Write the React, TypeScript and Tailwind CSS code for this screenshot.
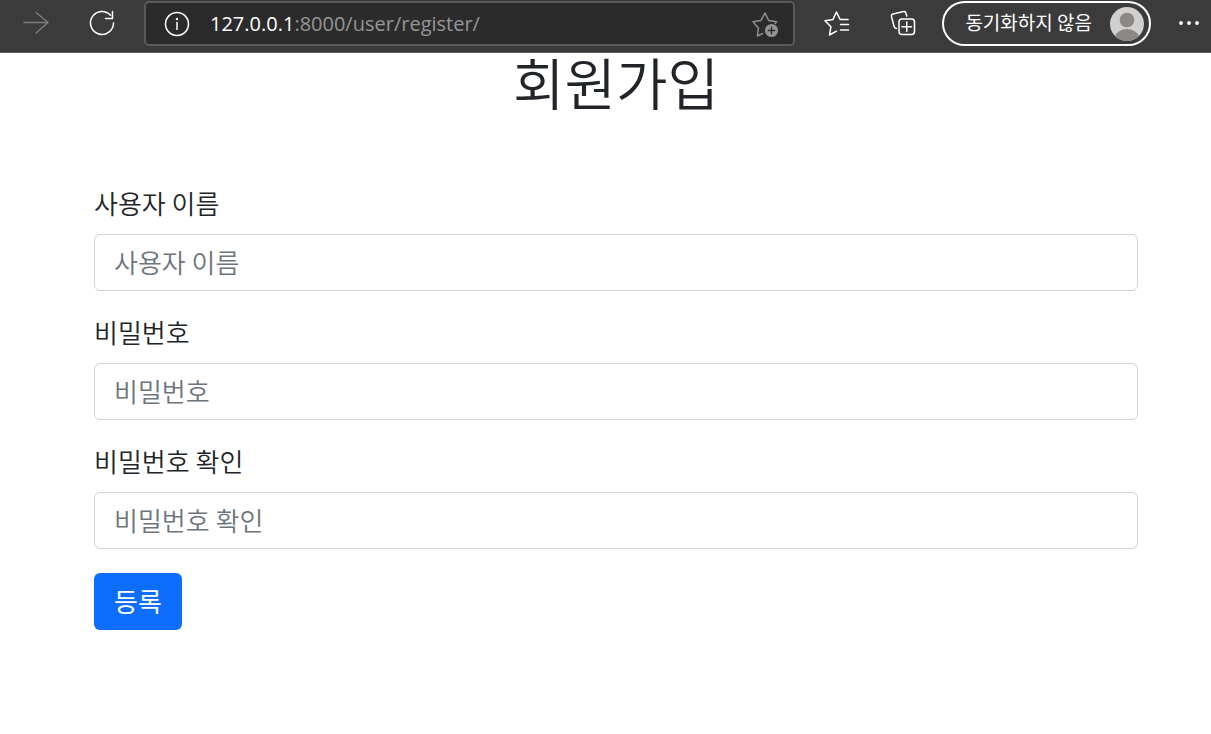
import type { ReactNode } from "react";

interface Field {
  id: string;
  label: string;
  type: "text" | "password";
}

const fields: Field[] = [
  { id: "username", label: "사용자 이름", type: "text" },
  { id: "password", label: "비밀번호", type: "password" },
  { id: "re-password", label: "비밀번호 확인", type: "password" },
];

export default function App() {
  return (
    <div className="min-h-screen bg-white font-['Noto_Sans_CJK_KR',sans-serif] text-[#212529]">
      <BrowserBar />
      <main className="pr-[73px] pl-[94px]">
        <h1 className="text-center text-[56px] leading-14 font-[350]">회원가입</h1>
        <RegisterForm />
      </main>
    </div>
  );
}

function RegisterForm() {
  return (
    <form className="mt-[77px] flex flex-col gap-6" onSubmit={(e) => e.preventDefault()}>
      {fields.map((f) => (
        <div key={f.id} className="flex flex-col gap-[14px]">
          <label htmlFor={f.id} className="text-[26px] leading-[34px] font-[350]">
            {f.label}
          </label>
          <input
            id={f.id}
            name={f.id}
            type={f.type}
            placeholder={f.label}
            className="h-[57px] w-full rounded-md border border-[#ced4da] px-[19px] pb-[2px] text-[26px] font-[350] outline-none placeholder:text-[#6c757d] focus:border-[#86b7fe]"
          />
        </div>
      ))}
      <button
        type="submit"
        className="h-[57px] self-start rounded-md bg-[#0d6efd] px-5 pb-[2px] text-[26px] leading-9 text-white"
      >
        등록
      </button>
    </form>
  );
}

function BrowserBar() {
  return (
    <header className="flex h-[53px] items-start border-b border-[#5a5858] bg-[#3b3b3b] pt-px pr-[6px] pl-5 text-white">
      <nav className="flex h-11 items-center gap-[34px]">
        <IconButton label="앞으로">
          <path d="M4 15.5h24M16 5.5l12 10-12 10.5" stroke="#7d7d7d" />
        </IconButton>
        <IconButton label="새로 고침">
          <path d="M24.5 8.2A11.5 11.5 0 1 0 27.5 16M26.5 4.5v7h-7" />
        </IconButton>
      </nav>
      <div className="ml-[26px] flex h-[45px] min-w-0 flex-1 items-center rounded-[5px] border-2 border-[#5a5a5a] bg-[#2b2b2b] pr-3 pl-[15px]">
        <IconButton label="사이트 정보 보기">
          <circle cx="16" cy="16" r="11.5" />
          <path d="M16 14.5v7" />
          <circle cx="16" cy="11" r="0.5" fill="currentColor" />
        </IconButton>
        <div
          role="textbox"
          aria-label="주소"
          contentEditable
          suppressContentEditableWarning
          className="ml-[17px] min-w-0 flex-1 truncate font-['Open_Sans',sans-serif] text-[20px] leading-7 text-[#969696] outline-none"
        >
          <span className="text-white">127.0.0.1</span>:8000/user/register/
        </div>
        <IconButton label="즐겨찾기에 추가">
          <g stroke="#8f8f8f">
            <path d="M13.5 25.6l-5.1 2.4 1-8L4 13.8l8-1.4L16 5l3.6 7.4 8 1.4-1.5 1.7" />
            <circle cx="22.5" cy="22.5" r="5.8" fill="#969696" />
            <path d="M22.5 19.3v6.4M19.3 22.5h6.4" stroke="#2b2b2b" />
          </g>
        </IconButton>
      </div>
      <div className="ml-[26px] flex h-11 items-center gap-[34px]">
        <IconButton label="즐겨찾기">
          <path d="M15.5 24.2L8.5 28l1.4-8.2L4 13.8l8-1.4L15.5 5l3.6 7.5h8M19.5 17.5h8M19.5 23h8" />
        </IconButton>
        <IconButton label="컬렉션">
          <rect x="12" y="12" width="15.5" height="15.5" rx="3" />
          <path d="M19.75 15v9.5M15 19.75h9.5M9.5 21.5a3 3 0 0 1-2.5-2.2L4.5 9.5a2 2 0 0 1 1.5-2.5l10.5-2.5a2 2 0 0 1 2.4 1.5l.9 3" />
        </IconButton>
      </div>
      <button
        type="button"
        className="ml-[23px] flex h-[45px] shrink-0 items-center gap-[18px] rounded-full border-2 border-white pr-[5px] pl-[21px]"
      >
        <span className="pb-1 text-[19px] leading-6">동기화하지 않음</span>
        <Avatar />
      </button>
      <button type="button" aria-label="설정 및 기타" className="ml-[22px] flex h-11 shrink-0 items-center">
        <svg viewBox="0 0 32 32" className="size-8" fill="currentColor">
          <circle cx="8" cy="16" r="1.9" />
          <circle cx="16" cy="16" r="1.9" />
          <circle cx="24" cy="16" r="1.9" />
        </svg>
      </button>
    </header>
  );
}

function IconButton({ label, children }: { label: string; children: ReactNode }) {
  return (
    <button type="button" aria-label={label} className="size-8 shrink-0">
      <svg
        viewBox="0 0 32 32"
        className="size-8"
        fill="none"
        stroke="currentColor"
        strokeWidth="1.5"
        strokeLinecap="round"
        strokeLinejoin="round"
      >
        {children}
      </svg>
    </button>
  );
}

function Avatar() {
  return (
    <svg viewBox="0 0 34 34" className="size-[34px]">
      <defs>
        <clipPath id="avatar">
          <circle cx="17" cy="17" r="17" />
        </clipPath>
      </defs>
      <g clipPath="url(#avatar)">
        <rect width="34" height="34" fill="#d2d0ce" />
        <circle cx="17" cy="13" r="7.3" fill="#8a8886" />
        <ellipse cx="17" cy="32" rx="12.5" ry="10" fill="#8a8886" />
      </g>
    </svg>
  );
}
